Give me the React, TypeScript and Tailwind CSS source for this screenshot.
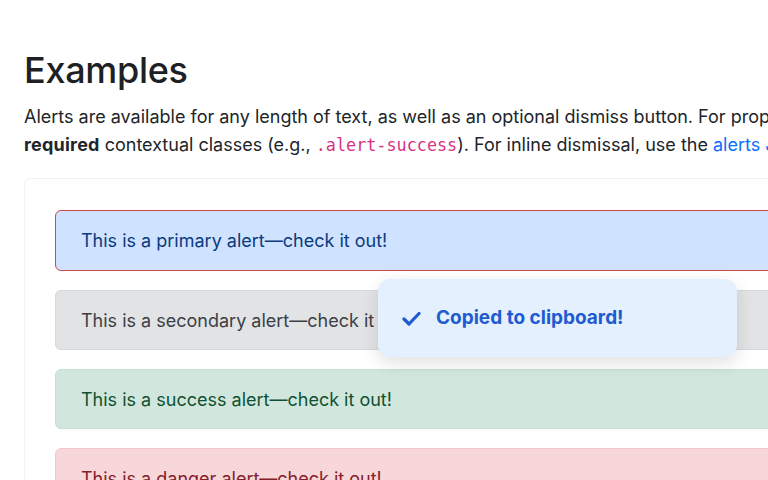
import React from "react";

const alerts = [
  { text: "This is a primary alert—check it out!", cls: "h-[61px] bg-[#cfe2ff] text-[#0b3a7e] border-[#d0494b]" },
  { text: "This is a secondary alert—check it out!", cls: "h-[60px] bg-[#e2e3e5] text-[#3c4045] border-[#d6d8db]" },
  { text: "This is a success alert—check it out!", cls: "h-[60px] bg-[#d1e7dd] text-[#0f5132] border-[#c3e0d2]" },
  { text: "This is a danger alert—check it out!", cls: "h-[60px] bg-[#f8d7da] text-[#842029] border-[#f3c8cc]" },
];

export default function App() {
  return (
    <div
      className="relative w-[768px] h-[480px] overflow-hidden bg-white text-[#212529]"
      style={{ fontFamily: "Inter, 'Noto Sans', sans-serif" }}
    >
      <div className="pl-6 pt-[46px] w-[1100px]">
        <h2 className="text-[36px] leading-[48px] font-medium tracking-[-0.3px] text-[#1d2125]">Examples</h2>
        <p className="mt-[9px] text-[18px] leading-[28px] text-[#212529]">
          Alerts are available for any length of text, as well as an optional dismiss button. For proper styling, use one of the eight
          <br />
          <b className="font-bold tracking-[0.2px]">required</b> contextual classes (e.g.,{" "}
          <code className="text-[#d63384] text-[16.8px] leading-[20px]" style={{ fontFamily: "'DejaVu Sans Mono', monospace" }}>
            .alert-success
          </code>
          ). For inline dismissal, use the <span className="text-[#0d6efd]">alerts JavaScript plugin</span>.
        </p>
        <div className="mt-[19px] border border-[#f1f2f3] rounded-t-[6px] pl-[30px] pt-[31px] flex flex-col gap-[19px]">
          {alerts.map((a, i) => (
            <div
              key={i}
              className={`border rounded-[6px] pl-[25px] flex items-center text-[18px] ${a.cls}`}
            >
              {a.text}
            </div>
          ))}
        </div>
      </div>
      <div className="absolute left-[378px] top-[279px] w-[359px] h-[78px] rounded-[12px] bg-[#e4f0fd] shadow-[0_6px_18px_rgba(0,0,0,0.12)] flex items-center pl-[24px] gap-[15px]">
        <svg width="19" height="15" viewBox="0 0 19 15" fill="none">
          <path d="M2 8 L7 13 L17 2.5" stroke="#1f5bd0" strokeWidth="3.2" strokeLinecap="round" strokeLinejoin="round" />
        </svg>
        <span className="text-[19px] font-bold text-[#1f5bd0]">Copied to clipboard!</span>
      </div>
    </div>
  );
}
